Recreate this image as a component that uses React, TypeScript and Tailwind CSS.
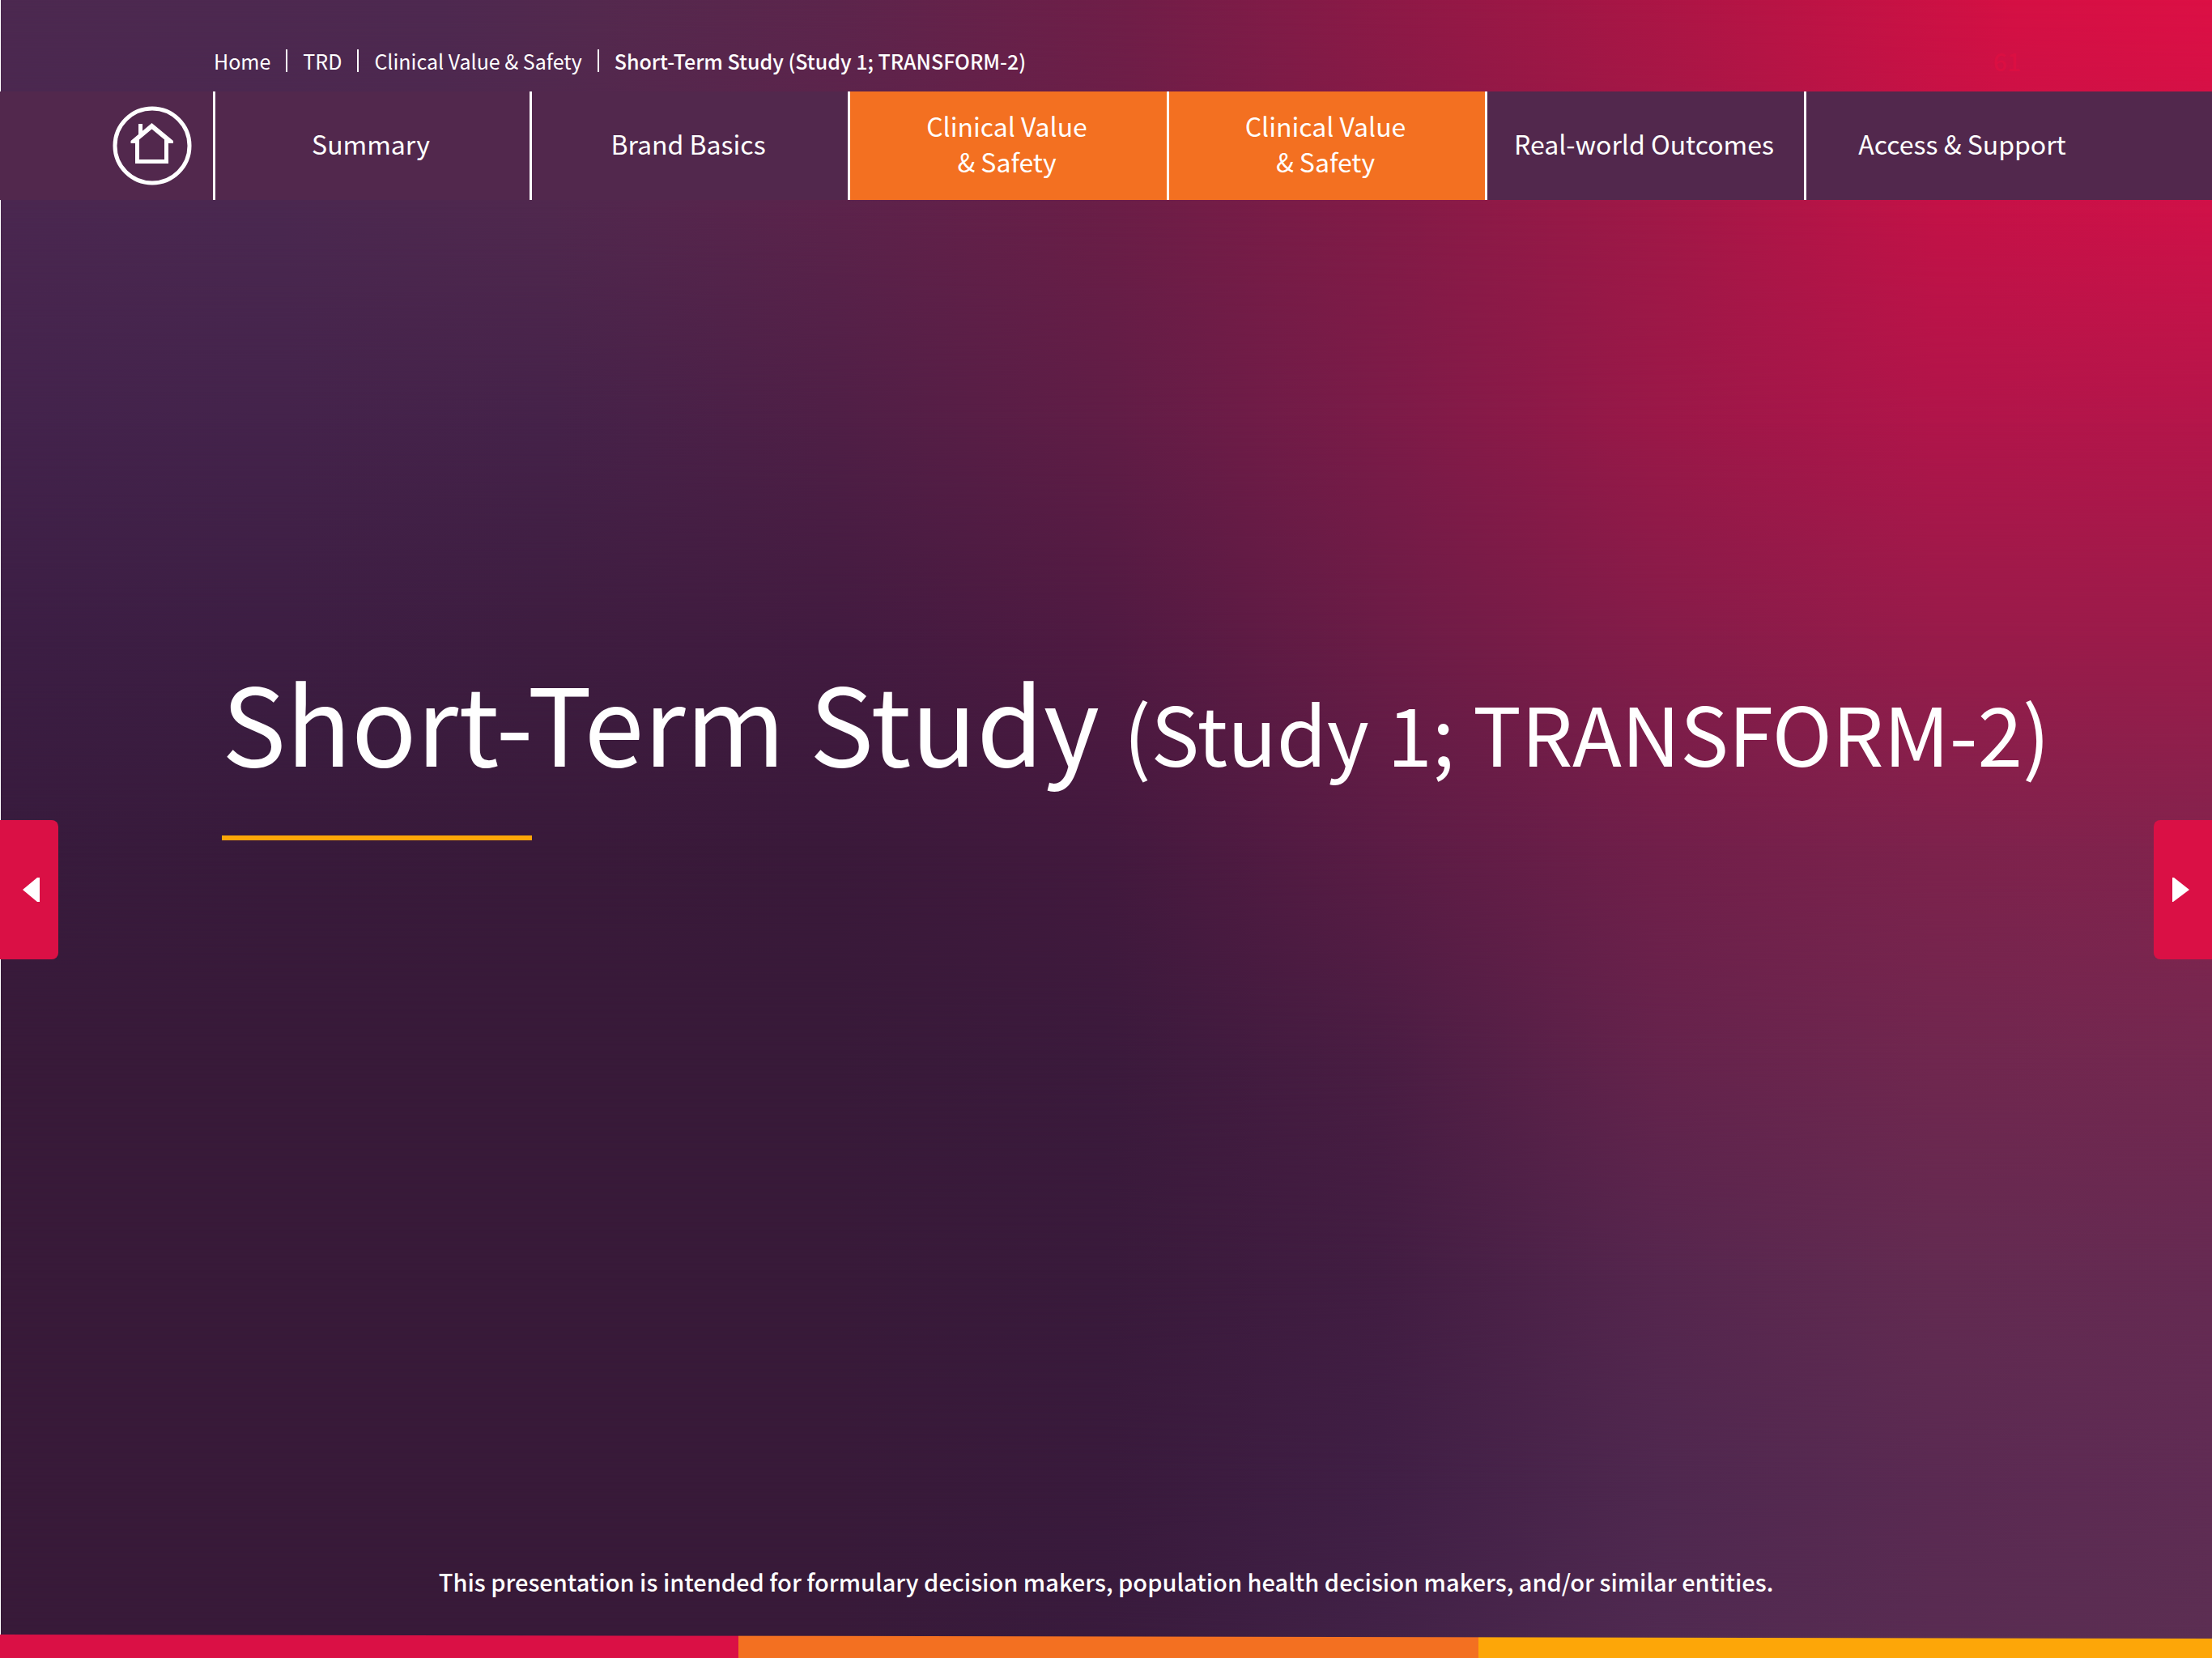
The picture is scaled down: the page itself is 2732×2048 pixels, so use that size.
import React from "react";

const rows = [
  "bg-[linear-gradient(to_right,#4c2950_0%,#4e2950_20%,#54294e_27%,#5d254c_38%,#701e48_51%,#951846_66%,#b81445_80%,#d51044_91%,#dc1045_100%)]",
  "bg-[linear-gradient(to_right,#4a2750,#4a2850,#50284e,#5b234b,#6a1e47,#821b47,#a01847,#c21247,#cf1148)] [mask-image:linear-gradient(transparent_0%,black_12.8%)]",
  "bg-[linear-gradient(to_right,#43234c,#44234b,#452249,#4f1f46,#601d46,#7b1b48,#9a1848,#b0154a,#b4164a)] [mask-image:linear-gradient(transparent_12.8%,black_25.5%)]",
  "bg-[linear-gradient(to_right,#3c1e44,#3d1e43,#3e1d40,#421b40,#501a42,#6b1c46,#851c49,#981b4a,#9d1b4a)] [mask-image:linear-gradient(transparent_25.5%,black_38.3%)]",
  "bg-[linear-gradient(to_right,#381b3d,#381a3b,#391a3a,#3a193a,#43193e,#5b1c45,#711f4a,#7d224c,#83234d)] [mask-image:linear-gradient(transparent_38.3%,black_51%)]",
  "bg-[linear-gradient(to_right,#381a39,#381a39,#381a39,#381a39,#3b1a3c,#4a1d43,#65234c,#70274f,#742850)] [mask-image:linear-gradient(transparent_51%,black_63.8%)]",
  "bg-[linear-gradient(to_right,#381a39,#381a39,#381a39,#381a39,#391a3b,#421d42,#56264e,#632b51,#662a52)] [mask-image:linear-gradient(transparent_63.8%,black_76.6%)]",
  "bg-[linear-gradient(to_right,#381a39,#381a39,#381a39,#381a39,#391a3c,#401f45,#4f284f,#5a2a52,#602c54)] [mask-image:linear-gradient(transparent_76.6%,black_89.4%)]",
  "bg-[linear-gradient(to_right,#381a39,#381a39,#381a39,#381a39,#391b3d,#422247,#502a51,#592c52,#5b2f52)] [mask-image:linear-gradient(transparent_89.4%,black_100%)]",
];

function Backdrop() {
  return (
    <div aria-hidden="true" className="absolute inset-0 border-l border-white">
      <div className="relative h-full">
        {rows.map((row) => (
          <div key={row} className={`absolute inset-0 ${row}`} />
        ))}
      </div>
    </div>
  );
}

function HomeIcon() {
  return (
    <svg viewBox="0 0 98 98" className="size-[98px]" fill="none" stroke="white" strokeWidth="5" aria-hidden="true">
      <circle cx="49" cy="49" r="46" />
      <path d="M30.5 39V68.5H66.5V39M34.5 35V22" />
      <path d="M48.5 21 75 43V46H69.5L48.5 28.5 27.5 46H22.5V43Z" fill="white" stroke="none" />
    </svg>
  );
}

function Crumb({ children }: { children: React.ReactNode }) {
  return (
    <li className="flex items-center">
      <a href="#">{children}</a>
      <span aria-hidden="true" className="mx-[19px] h-7 w-0.5 bg-white" />
    </li>
  );
}

const tabs = [
  { id: "summary", label: "Summary" },
  { id: "brand", label: "Brand Basics" },
  { id: "clinical", label: "Clinical Value & Safety", active: true },
  { id: "clinical-2", label: "Clinical Value & Safety", active: true },
  { id: "outcomes", label: "Real-world Outcomes" },
  { id: "access", label: "Access & Support", last: true },
];

export default function App() {
  return (
    <div className="relative flex min-h-screen flex-col overflow-hidden bg-[#381a39] font-['Noto_Sans_CJK_SC','Open_Sans',sans-serif] text-white">
      <Backdrop />

      <header className="relative">
        <div className="flex h-[113px] items-center justify-between pt-9 pr-[236px] pl-[264px] text-[25px] leading-[36px]">
          <nav aria-label="Breadcrumb">
            <ol className="flex items-center">
              <Crumb>Home</Crumb>
              <Crumb>TRD</Crumb>
              <Crumb>Clinical Value &amp; Safety</Crumb>
              <li className="font-medium" aria-current="page">
                Short-Term Study (Study 1; TRANSFORM-2)
              </li>
            </ol>
          </nav>
          <span className="text-[30px] font-medium text-[#db0f42]">61</span>
        </div>

        <nav
          aria-label="Main"
          className="grid h-[134px] grid-cols-[263fr_391fr_393fr_394fr_393fr_394fr_504fr] bg-[#52284d] text-[32px] leading-[44px]"
        >
          <a href="#" aria-label="Home" className="flex items-center justify-end pr-[26px]">
            <HomeIcon />
          </a>
          {tabs.map((tab) => (
            <a
              key={tab.id}
              href="#"
              className={`flex items-center justify-center border-l-3 border-white pb-1.5 text-center ${
                tab.active ? "bg-[#f37021] pr-21 pl-20" : tab.last ? "pr-[116px]" : "pr-1"
              }`}
            >
              {tab.label}
            </a>
          ))}
        </nav>
      </header>

      <main className="relative flex flex-1 flex-col">
        <div className="flex flex-1 flex-col pt-[542px] pl-[274px]">
          <h1 className="text-[133px] leading-[200px] whitespace-nowrap">
            Short-Term Study <span className="text-[100px] leading-none">(Study 1; TRANSFORM-2)</span>
          </h1>
          <div className="mt-[43px] h-1.5 w-[383px] bg-[#fda608]" />
        </div>
        <button
          type="button"
          aria-label="Previous"
          className="absolute top-[766px] left-0 flex h-[172px] w-[72px] items-center justify-end rounded-r-lg bg-[#da1045] pr-[23px]"
        >
          <svg viewBox="0 0 21 30" className="h-[30px] w-[21px]" fill="white" aria-hidden="true">
            <path d="M21 0V30H18L0 15 18 0Z" />
          </svg>
        </button>
        <button
          type="button"
          aria-label="Next"
          className="absolute top-[766px] right-0 flex h-[172px] w-[72px] items-center rounded-l-lg bg-[#da1045] pl-[23px]"
        >
          <svg viewBox="0 0 21 30" className="h-[30px] w-[21px]" fill="white" aria-hidden="true">
            <path d="M0 0H2L21 15 1 30H0Z" />
          </svg>
        </button>
      </main>

      <footer className="relative">
        <p className="pb-11 text-center text-[29px] leading-[44px] font-medium">
          This presentation is intended for formulary decision makers, population health decision makers, and/or similar
          entities.
        </p>
        <div className="grid h-[29px] grid-cols-[912fr_914fr_906fr] [clip-path:polygon(0_0,100%_5px,100%_100%,0_100%)]">
          <div className="bg-[#da1045]" />
          <div className="bg-[#f37021]" />
          <div className="bg-[#fda608]" />
        </div>
      </footer>
    </div>
  );
}
